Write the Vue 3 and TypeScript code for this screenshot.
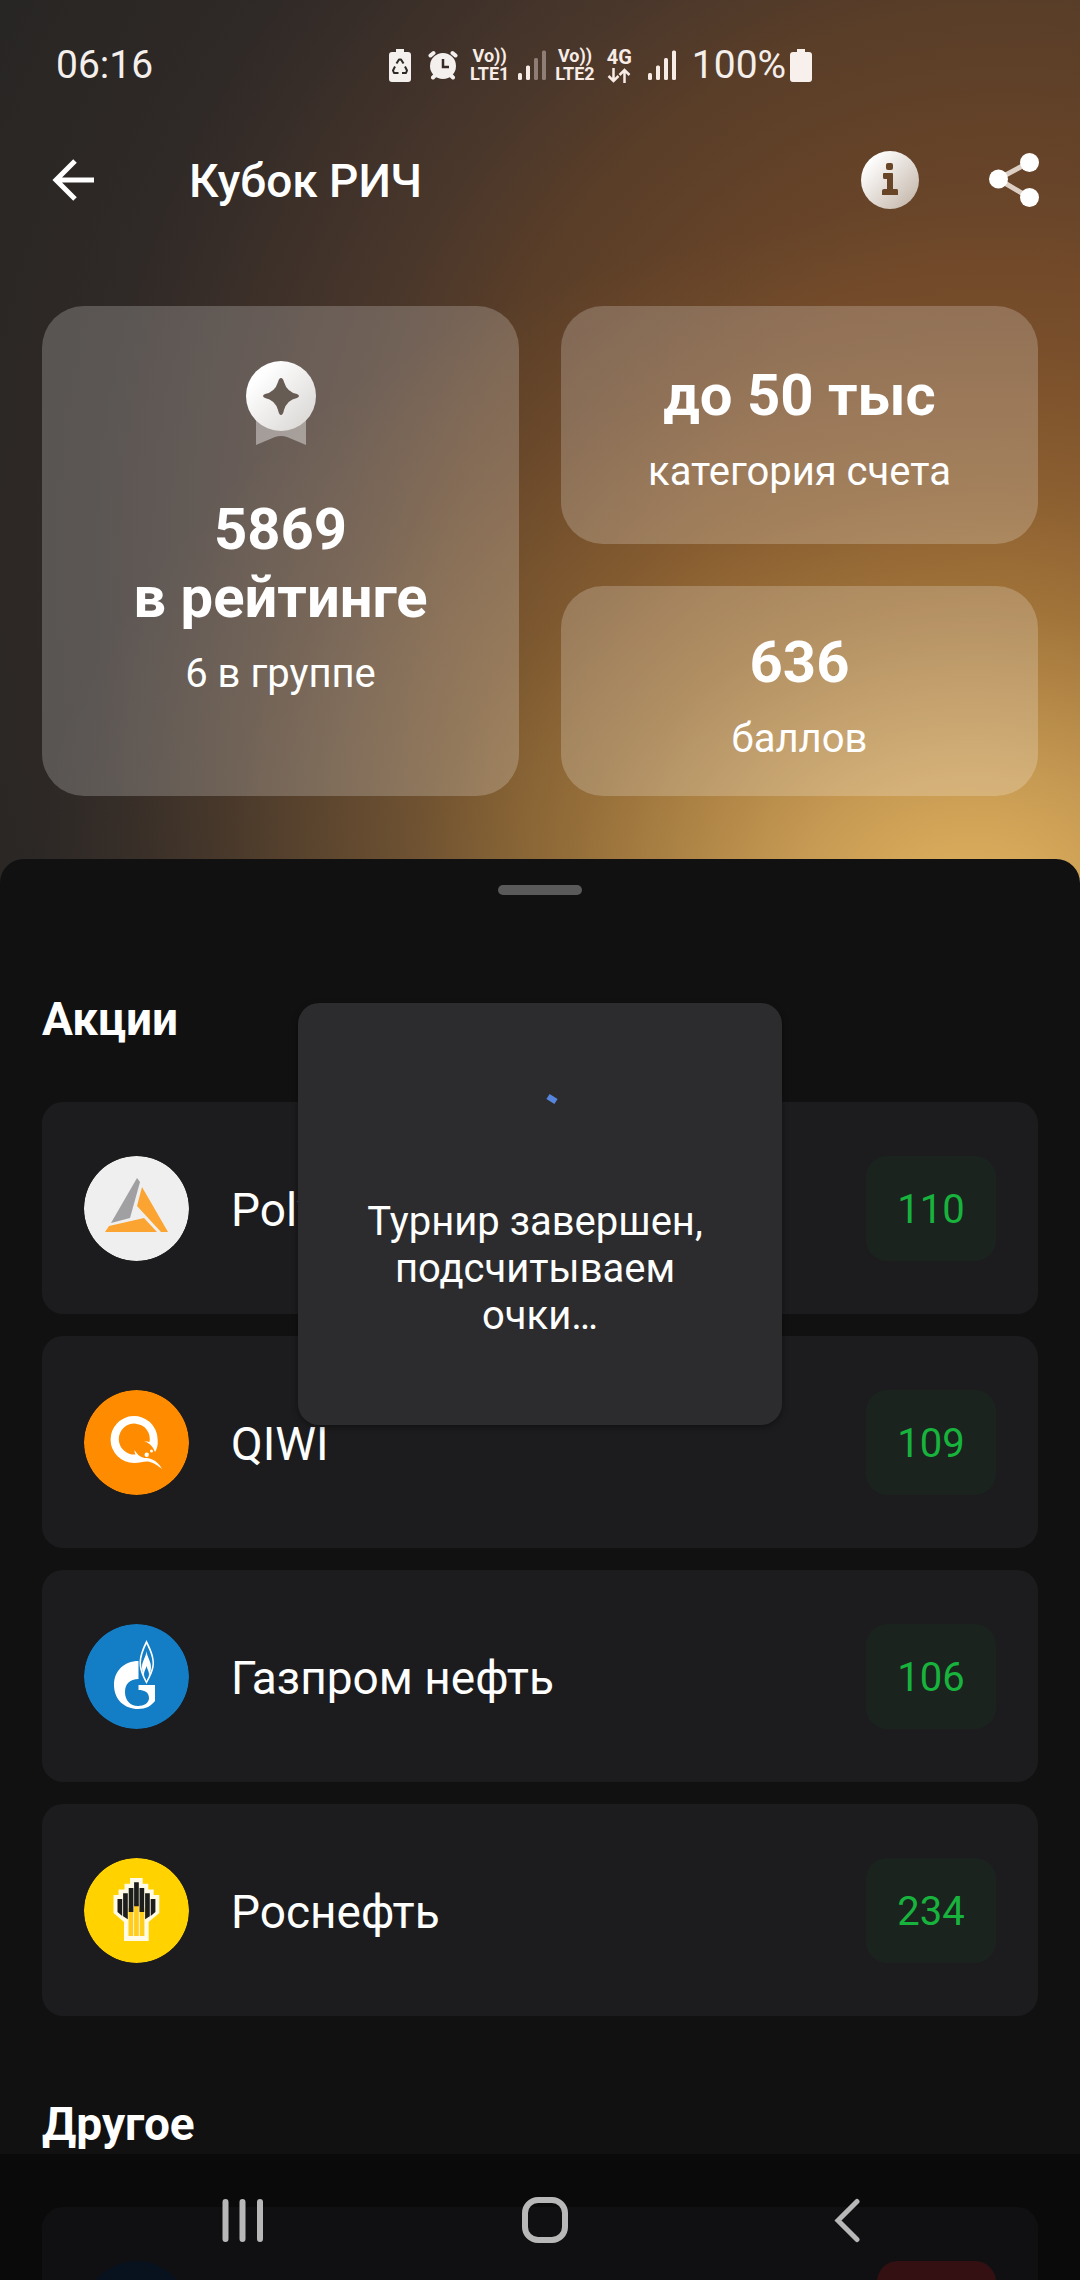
<script setup lang="ts">
interface Stock {
  id: string
  name: string
  points: number
}

const stocks: Stock[] = [
  { id: 'polymetal', name: 'Polymetal', points: 110 },
  { id: 'qiwi', name: 'QIWI', points: 109 },
  { id: 'gazprom', name: 'Газпром нефть', points: 106 },
  { id: 'rosneft', name: 'Роснефть', points: 234 },
]

const bars = [0, 1, 2, 3]
const networks = [
  { name: 'LTE1', level: 2, data: false },
  { name: 'LTE2', level: 4, data: true },
]
</script>

<template>
  <div class="screen">
    <div class="status">
      <span class="clock">06:16</span>
      <div class="indicators">
        <svg class="battery" viewBox="0 0 22 33">
          <path d="M7 0h8v3h4a3 3 0 0 1 3 3v24a3 3 0 0 1-3 3H3a3 3 0 0 1-3-3V6a3 3 0 0 1 3-3h4z" fill="#f3f0ee" />
          <g fill="none" stroke="#2e2826" stroke-width="2" stroke-linejoin="round">
            <path d="M7.500 14.500 10 10.500h2l2.500 4" />
            <path d="M16 17.500l2 4-1 2.500h-4" />
            <path d="M9.500 24H5l-1-2.500 2-4" />
          </g>
        </svg>
        <svg class="alarm" viewBox="0 0 30 30">
          <g stroke="#f3f0ee" stroke-width="4" stroke-linecap="round">
            <path d="M2.500 5.500 5.500 3M27.500 5.500 24.500 3M5 27.500l3-3M25 27.500l-3-3" />
          </g>
          <circle cx="15" cy="16" r="13" fill="#f3f0ee" />
          <path d="M15 9v8h6" fill="none" stroke="#352a26" stroke-width="2.500" />
        </svg>
        <template v-for="net in networks" :key="net.name">
          <span class="volte"><span>Vo))</span><span>{{ net.name }}</span></span>
          <span v-if="net.data" class="data">
            <span>4G</span>
            <svg viewBox="0 0 24 15" fill="none" stroke="#f8ece6" stroke-width="2.500">
              <path d="M6.500 0v13M1.500 8l5 5 5-5M17.500 15V2M12.500 7l5-5 5 5" />
            </svg>
          </span>
          <svg class="signal" viewBox="0 0 28 30">
            <rect
              v-for="b in bars"
              :key="b"
              :x="b * 8"
              :y="23 - b * 7.500"
              width="4"
              :height="7 + b * 7.500"
              rx="1.500"
              fill="#f8ece6"
              :opacity="b < net.level ? 1 : 0.4"
            />
          </svg>
        </template>
        <span class="percent">100%</span>
        <svg class="battery" viewBox="0 0 22 33">
          <path d="M7 0h8v3h4a3 3 0 0 1 3 3v24a3 3 0 0 1-3 3H3a3 3 0 0 1-3-3V6a3 3 0 0 1 3-3h4z" fill="#f8f0ec" />
        </svg>
      </div>
    </div>

    <header class="bar">
      <button class="icon-btn" aria-label="Назад">
        <svg width="42" height="42" viewBox="0 0 42 42" fill="none" stroke="#fff" stroke-width="5">
          <path d="M42 21H4M23 2 4 21l19 19" />
        </svg>
      </button>
      <h1>Кубок РИЧ</h1>
      <button class="icon-btn" aria-label="Информация">
        <svg width="58" height="58" viewBox="0 0 58 58">
          <defs>
            <linearGradient id="info-fill" x1="0" y1="0" x2="1" y2="1">
              <stop offset="0.150" stop-color="#fff" />
              <stop offset="1" stop-color="#bfb0a2" />
            </linearGradient>
          </defs>
          <circle cx="29" cy="29" r="29" fill="url(#info-fill)" />
          <g fill="#694528">
            <rect x="25" y="12" width="7" height="7" rx="2" />
            <path d="M23 22h8q1 0 1 1v15h4q1 0 1 2v4H21v-4q0-2 2-2h3V28h-3q-1 0-1-2v-3q0-1 1-1z" />
          </g>
        </svg>
      </button>
      <button class="icon-btn" aria-label="Поделиться">
        <svg width="50" height="54" viewBox="0 0 50 54">
          <path d="M41 9 9 26l32 19" fill="none" stroke="#ddcfc4" stroke-width="5" />
          <g fill="#fff">
            <circle cx="40.500" cy="9.500" r="9.500" />
            <circle cx="9.500" cy="26" r="9.500" />
            <circle cx="40.500" cy="44.500" r="9.500" />
          </g>
        </svg>
      </button>
    </header>

    <section class="stats">
      <article class="tile rank">
        <svg class="medal" viewBox="0 0 70 84">
          <defs>
            <linearGradient id="medal-fill" x1="0" y1="0" x2="1" y2="1">
              <stop offset="0.200" stop-color="#fff" />
              <stop offset="1" stop-color="#d6d3d0" />
            </linearGradient>
          </defs>
          <path d="M10 50h50v34l-19-8q-6-2-12 0l-19 8z" fill="#fff" opacity="0.400" />
          <circle cx="35" cy="35" r="35" fill="url(#medal-fill)" />
          <path
            d="M35 17q2 0 3 4 3 10 13 12 2 1 2 2t-2 2q-10 2-13 12-1 5-3 5t-3-5q-3-10-13-12-2-1-2-2t2-2q10-2 13-12 1-4 3-4z"
            fill="#675c53"
          />
        </svg>
        <strong>5869<br />в рейтинге</strong>
        <span>6 в группе</span>
      </article>
      <div class="column">
        <article class="tile category">
          <strong>до 50 тыс</strong>
          <span>категория счета</span>
        </article>
        <article class="tile score">
          <strong>636</strong>
          <span>баллов</span>
        </article>
      </div>
    </section>

    <main class="sheet">
      <div class="handle"></div>
      <h2>Акции</h2>
      <ul>
        <li v-for="stock in stocks" :key="stock.id">
          <svg class="logo" viewBox="0 0 105 105">
            <template v-if="stock.id === 'polymetal'">
              <circle cx="52.500" cy="52.500" r="52.500" fill="#efefef" />
              <path d="M53 22l3 4-10 36-19 5z" fill="#a0a0a3" />
              <path d="M58 31l26 45h-7L53 50zM25 70l35-8 13 14H21z" fill="#fba431" />
            </template>
            <template v-else-if="stock.id === 'qiwi'">
              <circle cx="52.500" cy="52.500" r="52.500" fill="#ff8c00" />
              <g fill="#fff">
                <path
                  d="M71 62C74 57 74 53 73.500 48A23.500 23.500 0 1 0 50 73C56 73 60 71 64 71.500C70 72.500 74 76 78 79C75 73 69 68 62 68C58 68 54 66 50.500 60C50.500 62 50.800 63 51.500 64.500A15.500 15.500 0 1 1 65.500 52L60 51C65 53 69 56 71 62Z"
                />
                <circle cx="62.700" cy="64.800" r="2.200" />
                <circle cx="67.500" cy="61" r="1.500" />
              </g>
            </template>
            <template v-else-if="stock.id === 'gazprom'">
              <circle cx="52.500" cy="52.500" r="52.500" fill="#137dc5" />
              <g fill="#fff">
                <path
                  d="M54.500 37C40 37 30 47 30 61C30 76 41 85 54 85C62 85 67 82 71 77V61H54.500V66C60 66 65 68 65 74C65 79 60 82 54 82C46 82 41 76 41 68C41 60 46 55 54.500 55Z"
                />
                <path d="M62.500 16C66 23 70 31 70 39S66 53 62.500 60C59 53 55.500 47 55.500 39S59 23 62.500 16Z" />
              </g>
              <path d="M62.500 20C65.500 26 68.500 33 68.500 39S65.500 50 62.500 56C59.500 50 57 45 57 39S59.500 26 62.500 20Z" fill="#137dc5" />
              <path d="M62.500 27C63 33 67 37 67 43S64.500 52 62.500 57C60.500 52 58 49 58 43S62 33 62.500 27Z" fill="#fff" />
              <path d="M62.500 42C63 45 65 47 65 50S63.500 54 62.500 57C61.500 54 60 53 60 50S62 45 62.500 42Z" fill="#137dc5" />
            </template>
            <template v-else>
              <circle cx="52.500" cy="52.500" r="52.500" fill="#ffd200" />
              <path
                d="M29.500 37h5v-5.500h6v-5.800H46V20h12.700v5.700h5.600v5.800h5.400V37h5.600v18L64.700 64v19H40V64L29.500 55z"
                fill="#fffbe6"
              />
              <path d="M44.500 50h4.700v28h-4.700zM50.100 46h4.700v32h-4.700zM55.700 50h4.700v28h-4.700z" fill="#ffcd1c" />
              <g fill="#1d1d1b">
                <path d="M33.500 41h4.700v17l-4.700-4zM39.100 35.300h4.700v26l-4.700-3zM44.700 30h4.700v24h-4.700zM50.100 24.300h4.700v24h-4.700z" />
                <path d="M55.500 30h4.700v24h-4.700zM61.100 35.300h4.700v23l-4.700 3zM66.700 41h4.700v13l-4.700 4z" />
              </g>
            </template>
          </svg>
          <span class="name">{{ stock.name }}</span>
          <span class="badge">{{ stock.points }}</span>
        </li>
      </ul>
      <h2>Другое</h2>
      <ul>
        <li>
          <span class="logo dim"></span>
          <span class="name"></span>
          <span class="badge loss"></span>
        </li>
      </ul>
    </main>

    <div class="overlay">
      <div class="dialog" role="alertdialog" aria-labelledby="dialog-text">
        <svg class="spinner" viewBox="0 0 60 60" fill="none" stroke="#5585dc" stroke-width="6">
          <path d="M38 22.500l8 5" />
        </svg>
        <p id="dialog-text">Турнир завершен, подсчитываем очки…</p>
      </div>
    </div>

    <nav class="system">
      <button aria-label="Недавние">
        <svg width="42" height="46" viewBox="0 0 42 46" stroke="#b8b8b8" stroke-width="6" stroke-linecap="round">
          <path d="M3.500 5v37M20.500 5v37M38 5v37" />
        </svg>
      </button>
      <button aria-label="Домой">
        <svg width="46" height="46" viewBox="0 0 46 46" fill="none" stroke="#b8b8b8" stroke-width="6">
          <rect x="3" y="3" width="40" height="40" rx="13" />
        </svg>
      </button>
      <button aria-label="Назад">
        <svg width="28" height="46" viewBox="0 0 28 46" fill="none" stroke="#b8b8b8" stroke-width="5" stroke-linecap="round">
          <path d="M24 4.500 5 23.500l19 19" />
        </svg>
      </button>
    </nav>
  </div>
</template>

<style>
body {
  background: #111;
}
</style>

<style scoped>
.screen {
  position: relative;
  display: flex;
  flex-direction: column;
  height: 100vh;
  overflow: hidden;
  color: #fff;
  font-family: Roboto, 'Noto Sans', sans-serif;
  background:
    radial-gradient(
      940px 700px at 90% 910px,
      rgba(226, 180, 96, 1) 0%,
      rgba(226, 180, 96, 0.76) 20%,
      rgba(222, 172, 80, 0.43) 43%,
      rgba(215, 160, 70, 0.25) 60%,
      rgba(200, 140, 60, 0.1) 81%,
      rgba(200, 140, 60, 0) 100%
    ),
    radial-gradient(
      1080px 1100px at 93% 560px,
      #744a29 0%,
      #6e4729 27%,
      #5a3e28 50%,
      #4a372b 61%,
      #2f2927 85%,
      #262523 110%
    );
}

button {
  padding: 0;
  border: 0;
  background: none;
  display: flex;
  align-items: center;
  justify-content: center;
}

svg {
  display: block;
}

.status {
  display: flex;
  flex-shrink: 0;
  align-items: center;
  height: 130px;
  padding: 0 56px;
}

.clock,
.percent {
  font-size: 39px;
  line-height: 48px;
  color: #f5efec;
}

.clock {
  width: 333px;
}

.indicators {
  display: flex;
  align-items: center;
}

.battery {
  width: 22px;
  height: 33px;
}

.alarm {
  width: 30px;
  height: 30px;
  margin: 0 12px 0 17px;
}

.volte,
.data {
  display: flex;
  flex-direction: column;
  align-items: center;
  font-size: 18px;
  line-height: 18px;
  font-weight: 700;
  color: #f8ece6;
}

.data {
  margin-left: 12px;
  font-size: 20px;
}

.data svg {
  width: 24px;
  height: 15px;
  margin-top: 2px;
}

.signal {
  width: 28px;
  height: 30px;
  margin: 0 9px;
}

.data + .signal {
  margin: 0 16px;
}

.percent {
  margin-right: 4px;
}

.bar {
  display: flex;
  flex-shrink: 0;
  align-items: center;
  height: 100px;
  padding: 0 41px 0 52px;
}

h1 {
  flex: 1;
  margin: 0 0 0 95px;
  padding-top: 2px;
  font-size: 46px;
  line-height: 54px;
  font-weight: 500;
}

.bar button + button {
  margin-left: 70px;
}

.stats {
  display: grid;
  grid-template-columns: 1fr 1fr;
  gap: 42px;
  padding: 76px 42px 63px;
}

.column {
  display: flex;
  flex-direction: column;
  gap: 42px;
}

.tile {
  display: flex;
  flex-direction: column;
  align-items: center;
  gap: 18px;
  padding-top: 55px;
  border-radius: 42px;
  background: rgba(255, 255, 255, 0.21);
  text-align: center;
}

.tile strong {
  font-size: 58px;
  line-height: 68px;
}

.tile span {
  font-size: 40px;
  line-height: 50px;
}

.category {
  padding-bottom: 47px;
}

.score {
  padding-top: 42px;
  padding-bottom: 32px;
}

.medal {
  width: 70px;
  height: 84px;
  margin-bottom: 32px;
}

.sheet {
  flex: 1 0 auto;
  padding: 0 42px;
  border-radius: 24px 24px 0 0;
  background: #111;
}

.handle {
  width: 84px;
  height: 10px;
  margin: 26px auto 97px;
  border-radius: 5px;
  background: #5a5a5b;
}

h2 {
  margin: 0;
  font-size: 46px;
  line-height: 54px;
  font-weight: 700;
}

ul {
  display: flex;
  flex-direction: column;
  gap: 22px;
  margin: 0;
  padding: 56px 0 81px;
  list-style: none;
}

li {
  display: flex;
  align-items: center;
  height: 212px;
  padding: 0 42px;
  border-radius: 21px;
  background: #1c1c1e;
}

.logo {
  width: 105px;
  height: 105px;
  border-radius: 50%;
}

.dim {
  background: #0e1e34;
}

.name {
  flex: 1;
  padding-top: 4px;
  margin-left: 42px;
  font-size: 46px;
  line-height: 54px;
}

.badge {
  display: flex;
  align-items: center;
  justify-content: center;
  box-sizing: border-box;
  width: 130px;
  height: 105px;
  padding-top: 2px;
  border-radius: 21px;
  background: #1b231f;
  color: #17b33c;
  font-size: 40px;
}

.loss {
  width: 119px;
  background: #571c1e;
}

.overlay {
  position: absolute;
  inset: 147px 0 0;
  display: flex;
  align-items: center;
  justify-content: center;
}

.dialog {
  display: flex;
  flex-direction: column;
  align-items: center;
  box-sizing: border-box;
  width: 484px;
  padding: 71px 60px 86px;
  border-radius: 21px;
  background: #2c2c2e;
  box-shadow: 0 2px 6px rgba(0, 0, 0, 0.4);
}

.spinner {
  width: 60px;
  height: 60px;
}

.dialog p {
  margin: 64px 0 0;
  font-size: 40px;
  line-height: 47px;
  text-align: center;
  white-space: break-spaces;
}

.system {
  position: absolute;
  left: 0;
  right: 0;
  bottom: 0;
  display: grid;
  grid-template-columns: repeat(3, 1fr);
  height: 126px;
  padding: 6px 82px 0 92px;
  box-sizing: border-box;
  background: rgba(0, 0, 0, 0.4);
}
</style>
